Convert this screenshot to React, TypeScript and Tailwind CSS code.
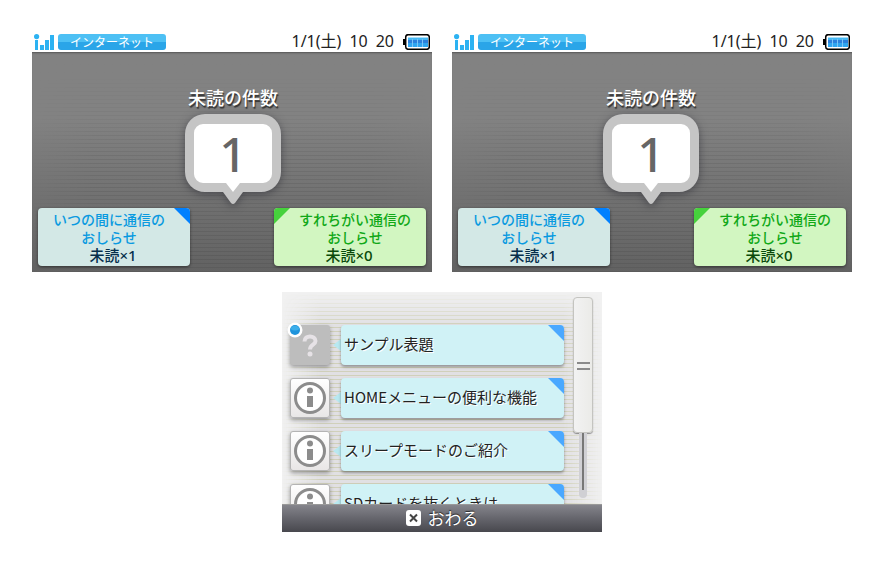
import React from "react";

const FONT = "font-['Noto_Sans_CJK_JP','Noto_Sans',sans-serif]";
const LATIN_FIRST = "font-['Noto_Sans','Noto_Sans_CJK_JP',sans-serif]";

function SignalIcon() {
  return (
    <svg width="20" height="16" viewBox="0 0 20 16" className="block" aria-label="電波">
      <g fill="#2cb2f2">
        <circle cx="2.6" cy="2.6" r="2.6" />
        <rect x="1" y="6" width="3" height="10" />
        <rect x="6" y="11" width="4" height="5" />
        <rect x="11" y="6" width="4" height="10" />
        <rect x="16" y="1" width="4" height="15" />
      </g>
    </svg>
  );
}

function BatteryIcon() {
  return (
    <svg width="28" height="16" viewBox="0 0 28 16" className="block" aria-label="電池残量">
      <rect x="1" y="5" width="3" height="6" fill="#000" />
      <rect x="3.7" y="0.7" width="23.6" height="14.6" rx="2.5" fill="#fff" stroke="#000" strokeWidth="1.5" />
      <rect x="6" y="3" width="20" height="3" fill="#45b8f4" />
      <rect x="6" y="6" width="20" height="3" fill="#2c80dc" />
      <rect x="6" y="9" width="20" height="4" fill="#2fa6f0" />
      <path d="M10.500 5v8M15.500 5v8M20.500 5v8" stroke="#7cc4f6" strokeWidth="1" />
      <path d="M6 3.500h20" stroke="#a8e0fb" />
    </svg>
  );
}

function Bubble({ count }: { count: number }) {
  return (
    <div className="grid w-24">
      <svg
        viewBox="0 0 96 90"
        className="col-start-1 row-start-1 block h-[90px] w-24 drop-shadow-[0_2px_4px_rgba(30,30,40,0.5)]"
      >
        <path
          d="M20 0H76A20 20 0 0 1 96 20V58A20 20 0 0 1 76 78H58L50 89Q48 91 46 89L38 78H20A20 20 0 0 1 0 58V20A20 20 0 0 1 20 0Z"
          fill="#c5c5c5"
        />
        <path d="M18 10H78A9 9 0 0 1 87 19V60A9 9 0 0 1 78 69H55L48 78L41 69H18A9 9 0 0 1 9 60V19A9 9 0 0 1 18 10Z" fill="#fff" />
      </svg>
      <span className="relative col-start-1 row-start-1 h-20 text-center font-['Noto_Sans',sans-serif] text-[48px] leading-[80px] font-medium text-[#666]">
        {count}
      </span>
    </div>
  );
}

function Notice({ kind, label, count }: { kind: "spot" | "street"; label: string; count: number }) {
  const spot = kind === "spot";
  return (
    <button
      className={`relative flex w-[152px] flex-col overflow-hidden rounded-[4px] py-[2px] text-center text-[14px] leading-[18px] shadow-[0_1px_3px_rgba(0,0,0,0.5)] ${
        spot ? "bg-[#d3e8e6] text-[#0a9ae0]" : "bg-[#d2f6c1] text-[#10a818]"
      }`}
    >
      <svg width="16" height="16" className={`absolute top-0 ${spot ? "right-0" : "left-0"}`}>
        <path d={spot ? "M0 0H16V16Z" : "M0 0H16L0 16Z"} fill={spot ? "#0080ff" : "#46d23c"} />
      </svg>
      <span className={`block w-full font-medium ${spot ? "pr-[10px]" : "pl-[10px]"}`}>
        {label}
        <br />
        おしらせ
      </span>
      <span
        className={`block w-full text-[15px] leading-[18px] font-medium ${LATIN_FIRST} ${
          spot ? "pr-[2px] text-[#062f4c]" : "pr-[2px] text-[#0a4a0a]"
        }`}
      >
        未読×{count}
      </span>
    </button>
  );
}

function UpperScreen({ eye }: { eye: "left" | "right" }) {
  return (
    <section className="w-[400px]">
      <header className="flex h-5 items-center pr-[2px] pl-[2px]">
        <SignalIcon />
        <span className="ml-1 h-4 w-[108px] rounded-[3px] bg-linear-to-b from-[#4dc0f4] from-50% to-[#2aa5e8] to-50% text-center text-[12px] leading-[16px] text-white">
          インターネット
        </span>
        <time className={`ml-auto flex gap-2 pb-[2px] text-[16px] leading-[18px] text-[#222] ${LATIN_FIRST}`}>
          <span>1/1(土)</span>
          <span>10</span>
          <span>20</span>
        </time>
        <span className="ml-2">
          <BatteryIcon />
        </span>
      </header>
      <div className="grid h-[220px] bg-linear-to-b from-[#828282] from-30% to-[#626262] shadow-[inset_0_2px_2px_-1px_rgba(0,0,0,0.35)]">
        <div className="col-start-1 row-start-1 bg-[repeating-linear-gradient(to_bottom,transparent_0_3px,rgba(0,0,0,0.07)_3px_4px)] mask-[linear-gradient(to_right,transparent,black_15%,black_85%,transparent),linear-gradient(to_bottom,transparent_10%,black_50%)] mask-intersect" />
        <div className="relative col-start-1 row-start-1 flex flex-col">
          <div className={`flex flex-col items-center ${eye === "left" ? "pl-[2px]" : "pr-[2px]"}`}>
            <h2 className="mt-8 mb-1 text-[18px] leading-[26px] font-medium text-white [text-shadow:1px_2px_1px_#333]">
              未読の件数
            </h2>
            <Bubble count={1} />
          </div>
          <div className="mt-auto flex justify-between px-[6px] pb-[6px]">
            <Notice kind="spot" label="いつの間に通信の" count={1} />
            <Notice kind="street" label="すれちがい通信の" count={0} />
          </div>
        </div>
      </div>
    </section>
  );
}

function InfoIcon() {
  return (
    <svg width="40" height="40" viewBox="0 0 40 40" className="block">
      <circle cx="20" cy="20" r="14.5" fill="#fff" stroke="#8c8c8c" strokeWidth="3" />
      <circle cx="20" cy="12.5" r="3" fill="#8c8c8c" />
      <rect x="17" y="18" width="6" height="11" fill="#8c8c8c" />
    </svg>
  );
}

function UnknownIcon() {
  return (
    <svg width="40" height="40" viewBox="0 0 40 40" className="block overflow-visible">
      <path d="M14.500 16.500C14.500 9.500 25.500 10 25.500 16C25.500 20 20 19.500 20 24.500" fill="none" stroke="#e6e2e6" strokeWidth="4" />
      <circle cx="20" cy="29" r="2.5" fill="#e6e2e6" />
      <circle cx="5" cy="5" r="7.5" fill="#fff" />
      <circle cx="5" cy="5" r="5" fill="#1f94dc" />
      <path d="M0.500 4A4.800 4.800 0 0 1 9.500 4Q5 7 0.500 4Z" fill="#3caeea" />
    </svg>
  );
}

function Row({ title, unread }: { title: string; unread?: boolean }) {
  return (
    <li className="flex h-10 shrink-0">
      <span
        className={`h-10 w-10 rounded-[3px] ${
          unread
            ? "bg-[#bdbdbd] shadow-[0_2px_4px_rgba(0,0,0,0.35)]"
            : "bg-linear-to-b from-white to-[#e8e6e6] shadow-[inset_0_0_0_1px_#b4b4b4,0_2px_4px_rgba(0,0,0,0.35)]"
        }`}
      >
        {unread ? <UnknownIcon /> : <InfoIcon />}
      </span>
      <svg width="8" height="40" viewBox="0 0 8 40" className="ml-[3px] block shrink-0">
        <path d="M0 20L8 14V26Z" fill="#b8e8f0" />
      </svg>
      <button className="relative flex-1 rounded-[4px] bg-[#d0f2f6] pb-[2px] pl-[3px] text-left text-[15px] leading-[38px] whitespace-nowrap text-[#222] shadow-[0_2px_3px_rgba(0,0,0,0.35)] [text-shadow:1px_1px_0_#fff]">
        {title}
        <svg width="16" height="16" className="absolute top-0 right-0 rounded-tr-[4px]">
          <path d="M0 0H16V16Z" fill="#4aa8ff" />
        </svg>
      </button>
    </li>
  );
}

function LowerScreen() {
  return (
    <section className="flex h-[240px] w-80 flex-col">
      <div className="grid h-[212px] grid-cols-1 grid-rows-[212px] overflow-hidden bg-[#f1f1f1]">
        <div className="col-start-1 row-start-1 bg-[#e1e0e3] mask-[linear-gradient(to_right,transparent,black_12%,black_88%,transparent),linear-gradient(to_bottom,transparent,black_16%)] mask-intersect">
          <div className="h-full bg-[repeating-linear-gradient(to_bottom,transparent_0_3px,#d0d0ba_3px_4px)]" />
        </div>
        <div className="relative col-start-1 row-start-1 flex pl-2">
          <ul id="list" className="flex w-[274px] flex-col gap-[13px] pt-[33px]">
            <Row title="サンプル表題" unread />
            <Row title="HOMEメニューの便利な機能" />
            <Row title="スリープモードのご紹介" />
            <Row title="SDカードを抜くときは" />
          </ul>
          <div className="ml-[9px] flex w-5 flex-col items-center pt-[5px]">
            <div
              role="scrollbar"
              aria-controls="list"
              aria-valuenow={0}
              className="flex h-[136px] w-5 flex-col items-center justify-center gap-1 rounded-[4px] border border-[#c4c4c0] bg-linear-to-r from-[#f2f2f2] to-[#ebebe8] pt-[2px] shadow-[0_1px_1px_rgba(0,0,0,0.4)]"
            >
              <i className="block h-[2px] w-[13px] bg-[#8a8a8a]" />
              <i className="block h-[2px] w-[13px] bg-[#8a8a8a]" />
            </div>
            <div className="flex h-[65px] w-2 justify-center rounded-b-full bg-[#d0d0d4]">
              <i className="block h-[57px] w-[2px] bg-[#777]" />
            </div>
          </div>
        </div>
      </div>
      <button className="relative flex h-7 items-center justify-center gap-[7px] border-t border-[#999] bg-linear-to-b from-[#85858c] via-[#65656c] to-[#48484e] pb-[2px] text-[17px] text-white [text-shadow:0_-1px_1px_#222]">
        <svg width="15" height="16" viewBox="0 0 15 16">
          <rect width="15" height="16" rx="3" fill="#fff" />
          <path d="M4 4.500L11 11.500M11 4.500L4 11.500" stroke="#444" strokeWidth="2" />
        </svg>
        <span className="leading-[25px]">おわる</span>
      </button>
    </section>
  );
}

export default function App() {
  return (
    <main className={`flex min-h-screen flex-col items-center gap-5 bg-white py-8 ${FONT}`}>
      <div className="flex gap-5">
        <UpperScreen eye="left" />
        <UpperScreen eye="right" />
      </div>
      <LowerScreen />
    </main>
  );
}
